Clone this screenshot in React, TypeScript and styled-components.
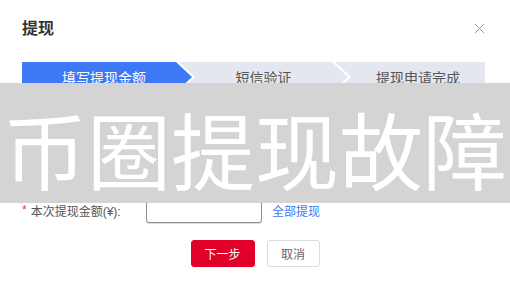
import React from "react";
import styled, { createGlobalStyle } from "styled-components";

const GlobalStyle = createGlobalStyle`
  html, body {
    margin: 0;
    padding: 0;
    background: #ffffff;
  }
  body {
    font-family: "Liberation Sans", "Noto Sans CJK SC", sans-serif;
    color: #333333;
  }
`;

const Dialog = styled.div`
  position: relative;
  width: 510px;
  height: 287px;
  box-sizing: border-box;
  padding: 0 25px 0 22px;
  background: #ffffff;
  overflow: hidden;
`;

const Header = styled.div`
  display: flex;
  align-items: center;
  justify-content: space-between;
  height: 58px;
  padding-top: 1px;
  padding-bottom: 2px;
  box-sizing: border-box;
`;

const Title = styled.h2`
  margin: 0;
  font-size: 16px;
  font-weight: bold;
  color: #333333;
  line-height: 20px;
`;

const Close = styled.button`
  border: 0;
  padding: 0;
  background: none;
  width: 12px;
  height: 12px;
  display: flex;
  align-items: center;
  justify-content: center;
`;

const Steps = styled.div`
  display: flex;
  height: 30px;
  width: 463px;
  margin-top: 4px;
`;

const Step = styled.div<{ $active?: boolean; $first?: boolean; $last?: boolean; $w: number }>`
  flex: 0 0 ${(p) => p.$w}px;
  margin-left: ${(p) => (p.$first ? 0 : -13)}px;
  display: flex;
  align-items: center;
  justify-content: center;
  box-sizing: border-box;
  padding-left: ${(p) => (p.$first ? 10 : 16)}px;
  padding-right: ${(p) => (p.$last ? 0 : 16)}px;
  font-size: 14px;
  background: ${(p) => (p.$active ? "#3d78f5" : "#e4e7ef")};
  color: ${(p) => (p.$active ? "#ffffff" : "#555555")};
  clip-path: ${(p) =>
    p.$first
      ? "polygon(0 0, calc(100% - 16px) 0, 100% 50%, calc(100% - 16px) 100%, 0 100%)"
      : p.$last
      ? "polygon(0 0, 100% 0, 100% 100%, 0 100%, 16px 50%)"
      : "polygon(0 0, calc(100% - 16px) 0, 100% 50%, calc(100% - 16px) 100%, 0 100%, 16px 50%)"};
`;

const Form = styled.div`
  display: flex;
  align-items: center;
  margin-top: 101px;
  height: 30px;
`;

const Label = styled.label`
  width: 124px;
  font-size: 12px;
  color: #555555;
  display: flex;
  align-items: center;
  padding-top: 4px;
`;

const Required = styled.span`
  color: #e4393c;
  margin-right: 4px;
  font-size: 12px;
`;

const AmountInput = styled.input`
  width: 116px;
  height: 30px;
  box-sizing: border-box;
  border: 1px solid #8f8f8f;
  border-radius: 3px;
  box-shadow: 0 1px 1px rgba(0, 0, 0, 0.15);
  outline: none;
  font-size: 12px;
`;

const AllLink = styled.a`
  margin-left: 10px;
  padding-top: 4px;
  font-size: 12px;
  color: #3d78f5;
  cursor: pointer;
`;

const Actions = styled.div`
  display: flex;
  justify-content: center;
  gap: 12px;
  margin-top: 17px;
  padding-left: 3px;
`;

const Button = styled.button<{ $primary?: boolean }>`
  height: 27px;
  width: ${(p) => (p.$primary ? 64 : 53)}px;
  box-sizing: border-box;
  border-radius: 3px;
  font-family: "Liberation Sans", "Noto Sans CJK SC", sans-serif;
  font-size: 12px;
  border: 1px solid ${(p) => (p.$primary ? "#e1002a" : "#dcdcdc")};
  background: ${(p) => (p.$primary ? "#e1002a" : "#ffffff")};
  color: ${(p) => (p.$primary ? "#ffffff" : "#666666")};
`;

const Banner = styled.div`
  position: absolute;
  left: 0;
  right: 0;
  top: 83px;
  height: 120px;
  background: #d4d4d4;
  display: flex;
  align-items: center;
  justify-content: center;
  padding-top: 10px;
  box-sizing: border-box;
  color: #ffffff;
  font-family: "Noto Sans CJK SC", sans-serif;
  font-size: 84px;
  line-height: 1;
  white-space: nowrap;
`;

export default function App() {
  return (
    <>
      <GlobalStyle />
      <Dialog>
        <Header>
          <Title>提现</Title>
          <Close aria-label="关闭">
            <svg width="11" height="11" viewBox="0 0 11 11">
              <path d="M1 1L10 10M10 1L1 10" stroke="#9a9a9a" strokeWidth="1" />
            </svg>
          </Close>
        </Header>
        <Steps>
          <Step $active $first $w={170}>填写提现金额</Step>
          <Step $w={169}>短信验证</Step>
          <Step $last $w={150}>提现申请完成</Step>
        </Steps>
        <Form>
          <Label>
            <Required>*</Required>本次提现金额(¥):
          </Label>
          <AmountInput />
          <AllLink>全部提现</AllLink>
        </Form>
        <Actions>
          <Button $primary>下一步</Button>
          <Button>取消</Button>
        </Actions>
        <Banner>币圈提现故障</Banner>
      </Dialog>
    </>
  );
}
